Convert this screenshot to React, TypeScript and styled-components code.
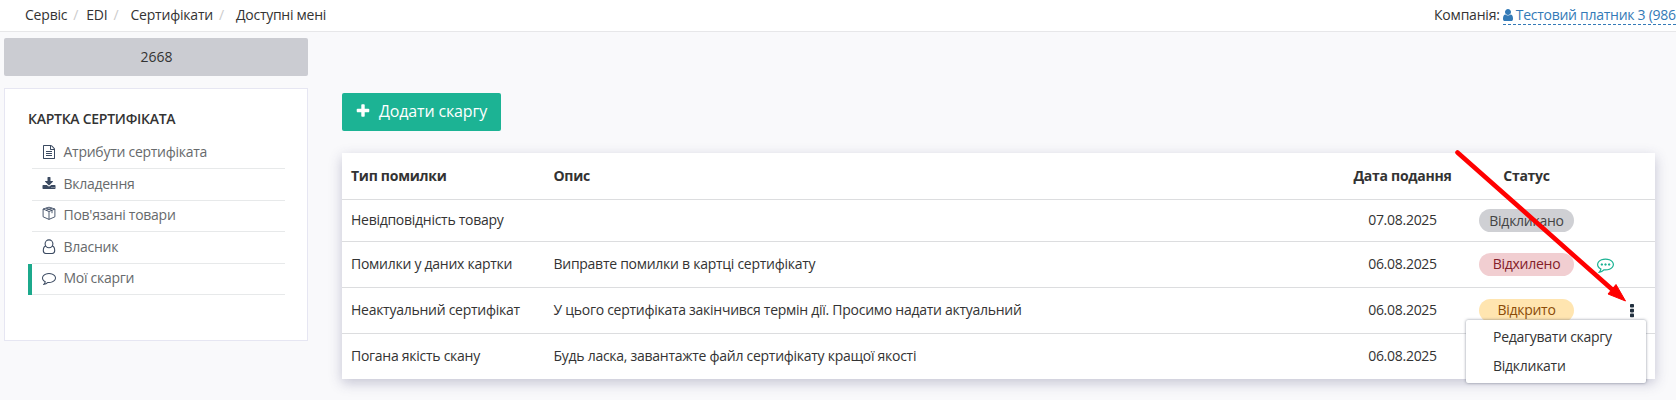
import React from "react";
import styled, { createGlobalStyle, css } from "styled-components";

const GlobalStyle = createGlobalStyle`
  * { box-sizing: border-box; }
  body {
    margin: 0;
    height: 400px;
    overflow: hidden;
    background: #f9f9fb;
    color: #333;
    font: 14px/20px "Open Sans", sans-serif;
    letter-spacing: -0.27px;
  }
`;

const Page = styled.div`
  position: relative;
  height: 400px;
  overflow: hidden;
`;

const TopBar = styled.header`
  display: flex;
  justify-content: space-between;
  height: 32px;
  padding: 5px 0 0 25px;
  background: #fff;
  border-bottom: 1px solid #e7e7e9;
  white-space: nowrap;
  letter-spacing: -0.2px;
`;

const Crumbs = styled.nav`
  display: flex;
`;

const Crumb = styled.span<{ $gap?: number }>`
  &:not(:last-child)::after {
    content: "/";
    color: #ccc;
    padding: 0 ${(p) => p.$gap ?? 9}px 0 6px;
  }
  &:last-child { letter-spacing: -0.27px; }
`;

const Company = styled.div`
  display: flex;
  flex: none;
  width: 242px;
`;

const CompanyLink = styled.a`
  display: flex;
  flex: none;
  gap: 3px;
  height: 20px;
  margin-left: 3px;
  color: #337ab7;
  border-bottom: 1px dashed #337ab7;
  letter-spacing: -0.27px;
`;

const Columns = styled.div`
  display: flex;
  align-items: flex-start;
`;

const Sidebar = styled.aside`
  width: 304px;
  margin: 6px 34px 0 4px;
`;

const NumberButton = styled.div`
  height: 38px;
  padding: 9px 0 0 1px;
  border-radius: 2px;
  background: #cbccd2;
  text-align: center;
  letter-spacing: 0;
`;

const Card = styled.section`
  height: 253px;
  margin-top: 12px;
  padding: 20px 22px 0 23px;
  border: 1px solid #e6e6f2;
  background: #fff;
`;

const CardTitle = styled.h4`
  margin: 0 0 6px;
  font-size: 14px;
  line-height: 20px;
  font-weight: 600;
`;

const MenuItem = styled.div<{ $height: number; $lift?: number; $active?: boolean }>`
  display: flex;
  align-items: center;
  gap: 8px;
  height: ${(p) => p.$height}px;
  padding: 0 0 ${(p) => p.$lift ?? 2}px 9.5px;
  border-left: 4px solid transparent;
  position: relative;
  color: #676a6c;
  &::after {
    content: "";
    position: absolute;
    left: 0;
    right: 0;
    bottom: 0;
    height: 1px;
    background: #e7e9ea;
  }
  ${(p) => p.$active && css`border-left-color: #1ca98c;`}
  svg { color: #3b4a61; flex: none; }
`;

const Main = styled.main`
  width: 1313px;
  padding-top: 61px;
`;

const AddButton = styled.button`
  display: flex;
  align-items: center;
  gap: 8px;
  width: 159px;
  height: 38px;
  padding: 0 0 2px 13px;
  border: 0;
  border-radius: 2px;
  background: #1cb394;
  color: #fff;
  font: 16px/22px "Open Sans", sans-serif;
  letter-spacing: -0.15px;
  white-space: nowrap;
`;

const Table = styled.div`
  margin-top: 22px;
  background: #fff;
  box-shadow: 0 4px 12px rgba(60, 60, 110, 0.28);
`;

const Row = styled.div<{ $height: number; $head?: boolean }>`
  display: grid;
  grid-template-columns: 202.5px 777.5px 143px 105px 1fr;
  align-items: center;
  height: ${(p) => p.$height}px;
  padding: 0 0 ${(p) => (p.$head ? 0 : 1)}px 9px;
  font-weight: ${(p) => (p.$head ? 700 : 400)};
  &:not(:last-child) { border-bottom: 1px solid #dcdddf; }
`;

const Centered = styled.div`
  text-align: center;
`;

const badgeTones = {
  gray: css`background: #cfd0d4; color: #444;`,
  red: css`background: #f1ced1; color: #842029;`,
  amber: css`background: #ffe5b0; color: #8a4b08;`,
};

const Badge = styled.span<{ $tone: keyof typeof badgeTones }>`
  display: block;
  width: 95px;
  height: 23px;
  margin: 1px auto 0;
  border-radius: 12px;
  line-height: ${(p) => (p.$tone === "gray" ? 24 : 22)}px;
  text-align: center;
  ${(p) => badgeTones[p.$tone]}
`;

const Actions = styled.div`
  display: flex;
  align-items: center;
  justify-content: space-between;
  padding: 1px 21px 0 18px;
  color: #1cb394;
`;

const Menu = styled.div`
  position: absolute;
  left: 1466px;
  top: 320px;
  width: 180px;
  height: 63px;
  padding: 2px 0 0 27px;
  border-radius: 2px;
  background: #fff;
  box-shadow: 0 0 3px rgba(60, 70, 90, 0.6);
  line-height: 29px;
`;

const Arrow = styled.svg`
  position: absolute;
  left: 1450px;
  top: 145px;
`;

const COMMENT =
  "M896 384q-204 0-381.5 69.5t-282 187.5-104.5 255q0 112 71.5 213.5t201.5 175.5l87 50-27 96q-24 91-70 172 152-63 275-171l43-38 57 6q69 8 130 8 204 0 381.5-69.5t282-187.5 104.5-255-104.5-255-282-187.5-381.5-69.5zm896 512q0 174-120 321.5t-326 233-450 85.5q-70 0-145-8-198 175-460 242-49 14-114 22h-5q-15 0-27-10.5t-16-27.5v-1q-3-4-.5-12t2-10 4.5-9.5l6-9 7-8.5 8-9q7-8 31-34.5t34.5-38 31-39.5 32.5-51 27-59 26-76q-157-89-247.5-220t-90.5-281q0-174 120-321.5t326-233 450-85.5 450 85.5 326 233 120 321.5z";

const ICONS = {
  file: "M1596 380q28 28 48 76t20 88v1152q0 40-28 68t-68 28h-1344q-40 0-68-28t-28-68v-1600q0-40 28-68t68-28h896q40 0 88 20t76 48zm-444-244v376h376q-10-29-22-41l-313-313q-12-12-41-22zm384 1528v-1024h-416q-40 0-68-28t-28-68v-416h-768v1536h1280zm-1024-864q0-14 9-23t23-9h704q14 0 23 9t9 23v64q0 14-9 23t-23 9h-704q-14 0-23-9t-9-23v-64zm736 224q14 0 23 9t9 23v64q0 14-9 23t-23 9h-704q-14 0-23-9t-9-23v-64q0-14 9-23t23-9h704zm0 256q14 0 23 9t9 23v64q0 14-9 23t-23 9h-704q-14 0-23-9t-9-23v-64q0-14 9-23t23-9h704z",
  download:
    "M1344 1344q0-26-19-45t-45-19-45 19-19 45 19 45 45 19 45-19 19-45zm256 0q0-26-19-45t-45-19-45 19-19 45 19 45 45 19 45-19 19-45zm128-224v320q0 40-28 68t-68 28h-1472q-40 0-68-28t-28-68v-320q0-40 28-68t68-28h465l135 136q58 56 136 56t136-56l136-136h464q40 0 68 28t28 68zm-325-569q17 41-14 70l-448 448q-18 19-45 19t-45-19l-448-448q-31-29-14-70 17-39 59-39h256v-448q0-26 19-45t45-19h256q26 0 45 19t19 45v448h256q42 0 59 39z",
  comment: COMMENT,
  commenting:
    "M640 896q0 53-37.5 90.5t-90.5 37.5-90.5-37.5-37.5-90.5 37.5-90.5 90.5-37.5 90.5 37.5 37.5 90.5zM1024 896q0 53-37.5 90.5t-90.5 37.5-90.5-37.5-37.5-90.5 37.5-90.5 90.5-37.5 90.5 37.5 37.5 90.5zM1408 896q0 53-37.5 90.5t-90.5 37.5-90.5-37.5-37.5-90.5 37.5-90.5 90.5-37.5 90.5 37.5 37.5 90.5z" +
    COMMENT,
  plus: "M1600 736v192q0 40-28 68t-68 28h-416v416q0 40-28 68t-68 28h-192q-40 0-68-28t-28-68v-416h-416q-40 0-68-28t-28-68v-192q0-40 28-68t68-28h416v-416q0-40 28-68t68-28h192q40 0 68 28t28 68v416h416q40 0 68 28t28 68z",
  user: "M1536 1399q0 109-62.5 187t-150.5 78h-854q-88 0-150.5-78t-62.5-187q0-85 8.5-160.5t31.5-152 58.5-131 94-89 134.5-34.5q131 128 313 128t313-128q76 0 134.5 34.5t94 89 58.5 131 31.5 152 8.5 160.5zm-256-887q0 159-112.5 271.5t-271.5 112.5-271.5-112.5-112.5-271.5 112.5-271.5 271.5-112.5 271.5 112.5 112.5 271.5z",
};

const Glyph = ({ name, size = 14 }: { name: keyof typeof ICONS; size?: number }) => (
  <svg width={size} height={size} viewBox="0 0 1792 1792" fill="currentColor">
    <path d={ICONS[name]} />
  </svg>
);

const UserGlyph = styled.svg`
  margin-top: 3px;
`;

const BoxIcon = () => (
  <svg width="14" height="18" viewBox="0 0 14 18" fill="none" stroke="currentColor" strokeWidth="0.9" strokeLinejoin="round">
    <path d="M7 1.200 12.900 3v7.800L7 13.400 1.100 10.800V3zM1.100 3 7 5.500 12.900 3M7 5.500v7.900M4 2.100 10 4.300v2.900M10 2.100 4 4.300" />
  </svg>
);

const OwnerIcon = () => (
  <svg width="14" height="16" viewBox="0 0 14 16" fill="none" stroke="currentColor" strokeWidth="1.1">
    <circle cx="7" cy="4.800" r="3.900" />
    <path d="M3.800 7C2 7.400 1.300 9.300 1.300 11.600c0 1.700 1 2.900 2.500 2.900h6.400c1.500 0 2.500-1.200 2.500-2.900 0-2.300-.7-4.200-2.500-4.600" />
  </svg>
);

const Dots = () => (
  <svg width="4" height="14" viewBox="0 0 4 14" fill="#22303f">
    <rect width="4" height="3.600" rx="0.8" />
    <rect y="4.800" width="4" height="3.600" rx="0.8" />
    <rect y="9.600" width="4" height="3.600" rx="0.8" />
  </svg>
);

const complaints: { type: string; text: string; date: string; height: number; status?: string; tone?: keyof typeof badgeTones; action?: React.ReactNode }[] = [
  { type: "Невідповідність товару", text: "", date: "07.08.2025", height: 42, status: "Відкликано", tone: "gray" },
  { type: "Помилки у даних картки", text: "Виправте помилки в картці сертифікату", date: "06.08.2025", height: 46, status: "Відхилено", tone: "red", action: <Glyph name="commenting" size={17} /> },
  { type: "Неактуальний сертифікат", text: "У цього сертифіката закінчився термін дії. Просимо надати актуальний", date: "06.08.2025", height: 46, status: "Відкрито", tone: "amber", action: <><span /><Dots /></> },
  { type: "Погана якість скану", text: "Будь ласка, завантажте файл сертифікату кращої якості", date: "06.08.2025", height: 45 },
];

export default function App() {
  return (
    <Page>
      <GlobalStyle />
      <TopBar>
        <Crumbs>
          <Crumb $gap={8}>Сервіс</Crumb>
          <Crumb $gap={12}>EDI</Crumb>
          <Crumb $gap={12}>Сертифікати</Crumb>
          <Crumb>Доступні мені</Crumb>
        </Crumbs>
        <Company>
          Компанія:
          <CompanyLink>
            <UserGlyph width="10" height="14" viewBox="256 0 1280 1792" fill="currentColor">
              <path d={ICONS.user} />
            </UserGlyph>
            Тестовий платник 3 (986
          </CompanyLink>
        </Company>
      </TopBar>
      <Columns>
        <Sidebar>
          <NumberButton>2668</NumberButton>
          <Card>
            <CardTitle>КАРТКА СЕРТИФІКАТА</CardTitle>
            <MenuItem $height={34} $lift={0}><Glyph name="file" />Атрибути сертифіката</MenuItem>
            <MenuItem $height={32}><Glyph name="download" />Вкладення</MenuItem>
            <MenuItem $height={31} $lift={4}><BoxIcon />Пов'язані товари</MenuItem>
            <MenuItem $height={32}><OwnerIcon />Власник</MenuItem>
            <MenuItem $height={31} $lift={4} $active><Glyph name="comment" />Мої скарги</MenuItem>
          </Card>
        </Sidebar>
        <Main>
          <AddButton><Glyph name="plus" size={16} />Додати скаргу</AddButton>
          <Table>
            <Row $height={47} $head>
              <div>Тип помилки</div>
              <div>Опис</div>
              <Centered>Дата подання</Centered>
              <Centered>Статус</Centered>
            </Row>
            {complaints.map((c) => (
              <Row key={c.type} $height={c.height}>
                <div>{c.type}</div>
                <div>{c.text}</div>
                <Centered>{c.date}</Centered>
                <div>{c.tone && <Badge $tone={c.tone}>{c.status}</Badge>}</div>
                <Actions>{c.action}</Actions>
              </Row>
            ))}
          </Table>
        </Main>
      </Columns>
      <Menu>
        <div>Редагувати скаргу</div>
        <div>Відкликати</div>
      </Menu>
      <Arrow width="180" height="160" viewBox="0 0 180 160">
        <path d="M7.500 7.500 165 147" stroke="#f00" strokeWidth="4.600" strokeLinecap="round" />
        <path d="M175.500 156 158 149 166 139.500z" fill="#f00" stroke="#f00" />
      </Arrow>
    </Page>
  );
}
